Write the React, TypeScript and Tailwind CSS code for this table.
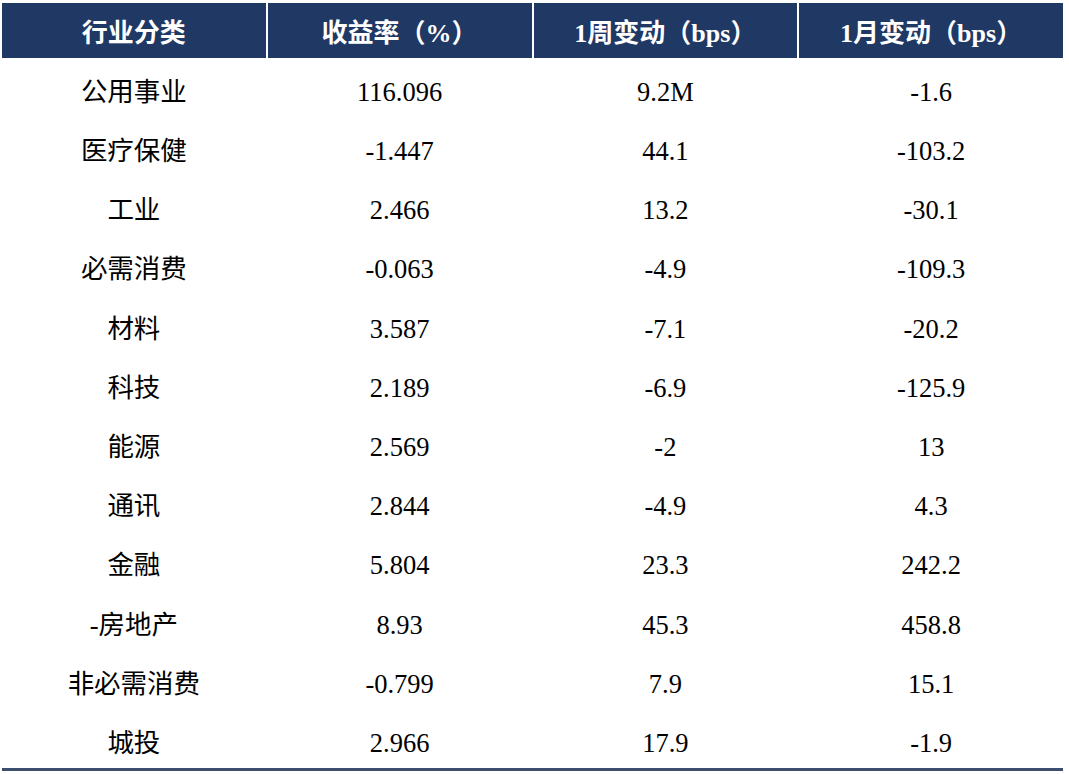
const headers = ["行业分类", "收益率（%）", "1周变动（bps）", "1月变动（bps）"];

const rows: string[][] = [
  ["公用事业", "116.096", "9.2M", "-1.6"],
  ["医疗保健", "-1.447", "44.1", "-103.2"],
  ["工业", "2.466", "13.2", "-30.1"],
  ["必需消费", "-0.063", "-4.9", "-109.3"],
  ["材料", "3.587", "-7.1", "-20.2"],
  ["科技", "2.189", "-6.9", "-125.9"],
  ["能源", "2.569", "-2", "13"],
  ["通讯", "2.844", "-4.9", "4.3"],
  ["金融", "5.804", "23.3", "242.2"],
  ["-房地产", "8.93", "45.3", "458.8"],
  ["非必需消费", "-0.799", "7.9", "15.1"],
  ["城投", "2.966", "17.9", "-1.9"],
];

const App = () => {
  return (
    <div
      className="w-[1069px] h-[774px] bg-white text-black overflow-hidden"
      style={{ fontFamily: '"Liberation Serif", "Noto Sans CJK SC", serif' }}
    >
      <div className="pl-[2px] pr-[6px] pt-[3px]">
        {/* Header */}
        <div className="grid grid-cols-4 gap-[2px] h-[55px]">
          {headers.map((h) => (
            <div
              key={h}
              className="bg-[#1f3864] text-white font-bold text-[26px] flex items-center justify-center pt-[6px]"
            >
              {h}
            </div>
          ))}
        </div>

        {/* Body */}
        <div className="border-b-[3px] border-[#3c4d6e]">
          {rows.map((r, i) => (
            <div key={i} className="grid grid-cols-4 gap-[2px] h-[59.2px]">
              {r.map((cell, j) => (
                <div
                  key={j}
                  className="flex items-center justify-center pt-[9px] text-[26.5px] leading-none"
                >
                  {cell}
                </div>
              ))}
            </div>
          ))}
        </div>
      </div>
    </div>
  );
};

export default App;
